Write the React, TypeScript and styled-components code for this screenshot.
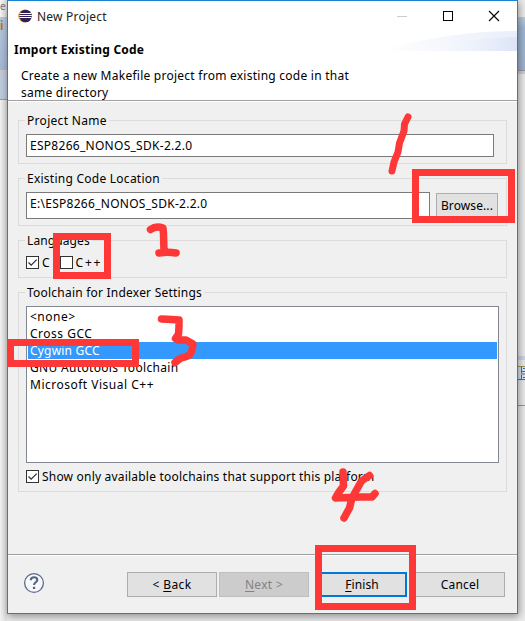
import React from "react";
import styled, { createGlobalStyle } from "styled-components";

const RED = "#fd3836";

const GlobalStyle = createGlobalStyle`
  *, *::before, *::after { box-sizing: border-box; }
  html, body { margin: 0; padding: 0; }
  body {
    width: 525px; height: 621px; overflow: hidden; background: #f0f0f0;
    font-family: "Noto Sans", "Open Sans", sans-serif; font-size: 12px; color: #000;
  }
`;

const Desktop = styled.div`
  position: relative;
  display: flex;
  width: 525px;
  height: 621px;
  overflow: hidden;
  background: #e9e9eb;
`;

const Strip = styled.div<{ $w: number }>`
  display: flex;
  flex-direction: column;
  flex: none;
  width: ${(p) => p.$w}px;
`;

const Band = styled.div<{ $h: number; $bg: string }>`
  flex: none;
  height: ${(p) => p.$h}px;
  background: ${(p) => p.$bg};
`;

const Letter = styled.span<{ $c: string; $bold?: boolean }>`
  display: block;
  width: max-content;
  font-size: ${(p) => (p.$bold ? 12 : 10)}px;
  line-height: ${(p) => (p.$bold ? 18 : 12)}px;
  color: ${(p) => p.$c};
  font-weight: ${(p) => (p.$bold ? 700 : 400)};
`;

const Dialog = styled.main`
  display: flex;
  flex-direction: column;
  flex: none;
  width: 511px;
  height: 614px;
  border: 1px solid #1883d7;
  background: #f0f0f0;
  box-shadow: 1px 2px 8px rgba(0, 0, 0, 0.42);
  z-index: 1;
`;

const TitleBar = styled.header`
  display: flex;
  align-items: center;
  height: 30px;
  padding: 0 17px 1px 10px;
  background: #fff;
`;

const Title = styled.div`
  flex: 1;
  margin-left: 5px;
  padding-top: 1px;
  color: #222;
`;

const WindowControls = styled.div`
  display: flex;
  gap: 34px;
`;

const Banner = styled.section`
  position: relative;
  height: 69px;
  padding: 10px 6px 0;
  background: #fff;
`;

const BannerArt = styled.svg`
  position: absolute;
  right: 0;
  top: 0;
`;

const BannerTitle = styled.h1`
  margin: 0 0 8px;
  height: 18px;
  line-height: 18px;
  font-size: 12px;
`;

const BannerText = styled.p`
  margin: 0;
  padding-left: 7px;
  line-height: 17px;
`;

const Rule = styled.div`
  height: 2px;
  flex: none;
  border-top: 1px solid #a0a0a0;
  background: #fff;
`;

const Content = styled.div`
  display: flex;
  flex-direction: column;
  gap: 14px;
  height: 452px;
  padding: 18px 10px 0;
`;

const Group = styled.section<{ $h: number }>`
  flex: none;
  height: ${(p) => p.$h}px;
  padding: 0 7px;
  border: 1px solid #dcdcdc;
`;

const Legend = styled.h2`
  width: max-content;
  height: 17px;
  margin: -9px 0 5px -1px;
  padding: 0 2px;
  background: #f0f0f0;
  line-height: 18px;
  font-size: 12px;
  font-weight: 400;
`;

const Text = styled.span<{ $ls?: number }>`
  white-space: pre;
  letter-spacing: ${(p) => p.$ls ?? 0}px;
`;

const Row = styled.div<{ $gap: number; $top?: number }>`
  display: flex;
  gap: ${(p) => p.$gap}px;
  padding-top: ${(p) => p.$top ?? 0}px;
`;

const Field = styled.div<{ $w: number; $h: number }>`
  width: ${(p) => p.$w}px;
  height: ${(p) => p.$h}px;
  padding-left: 3px;
  border: 1px solid #7a7a7a;
  background: #fff;
  line-height: 21px;
`;

const Button = styled.button<{ $w?: number; $default?: boolean; $top?: number }>`
  width: ${(p) => p.$w ?? 90}px;
  height: 25px;
  margin: ${(p) => p.$top ?? 0}px 0 0;
  padding: 0;
  border: ${(p) => (p.$default ? "2px solid #0078d7" : "1px solid #adadad")};
  background: #e1e1e1;
  color: #000;
  font: inherit;
  line-height: 20px;
  &:disabled { background: #ccc; border-color: #bfbfbf; color: #838383; }
`;

const Key = styled.span`
  text-decoration: underline;
  text-underline-offset: 2px;
  text-decoration-thickness: 1px;
  text-decoration-skip-ink: none;
`;

const CheckLabel = styled.label`
  display: flex;
  gap: 3px;
  height: 13px;
  line-height: 14px;
`;

const Box = styled.svg`
  flex: none;
  display: block;
`;

const HelpIcon = styled.svg`
  margin-top: -3px;
`;

const List = styled.ul`
  width: 473px;
  height: 157px;
  margin: 0 0 7px;
  padding: 1px;
  border: 1px solid #828790;
  background: #fff;
  list-style: none;
`;

const Item = styled.li<{ $on?: boolean }>`
  height: 17px;
  padding-left: 2px;
  line-height: 18px;
  background: ${(p) => (p.$on ? "#3399ff" : "transparent")};
  color: ${(p) => (p.$on ? "#fff" : "#000")};
`;

const Footer = styled.footer`
  display: flex;
  align-items: center;
  height: 57px;
  padding: 0 12px 0 15px;
`;

const FooterButtons = styled.div`
  display: flex;
  gap: 8px;
  margin-left: auto;
`;

const Paging = styled.div`
  display: flex;
  gap: 2px;
`;

const Markup = styled.svg`
  position: absolute;
  inset: 0;
  z-index: 2;
  pointer-events: none;
`;

function Check({ on }: { on?: boolean }) {
  return (
    <Box width="13" height="13">
      <rect x=".5" y=".5" width="12" height="12" fill="#fff" stroke="#333" />
      {on && <path d="M2.5 6.5 5.2 9.2 10.7 3.6" fill="none" stroke="#333" strokeWidth="1.3" />}
    </Box>
  );
}

const toolchains: { name: string; ls: number }[] = [
  { name: "<none>", ls: 0.5 },
  { name: "Cross GCC", ls: 0.5 },
  { name: "Cygwin GCC", ls: 0.2 },
  { name: "GNU Autotools Toolchain", ls: 0.32 },
  { name: "Microsoft Visual C++", ls: 0.5 },
];

export default function App() {
  return (
    <Desktop>
      <GlobalStyle />
      <Strip $w={7}>
        <Band $h={17} $bg="linear-gradient(90deg,#f5f5f5,#dedede)"><Letter $c="#777">e</Letter></Band>
        <Band $h={53} $bg="linear-gradient(#b5c8e0,#a5b8d3)"><Letter $c="#c07a16" $bold>i</Letter></Band>
        <Band $h={4} $bg="#c8c8d6" />
        <Band $h={25} $bg="#bdcbdb" />
        <Band $h={1} $bg="#999" />
        <Band $h={521} $bg="linear-gradient(90deg,#f2f2f2,#dedede)" />
      </Strip>
      <Dialog>
        <TitleBar>
          <svg width="14" height="14" viewBox="0 0 14 14">
            <circle cx="6.6" cy="7" r="6.4" fill="#f7941e" />
            <circle cx="7.6" cy="7" r="6.3" fill="#2c2255" />
            <path d="M1.5 4.5h12M1.2 6.5h12.6M1.5 8.5h12" stroke="#fff" strokeWidth="1" />
          </svg>
          <Title><Text $ls={0.22}>New Project</Text></Title>
          <WindowControls>
            <svg width="12" height="12"><path d="M1 6.5h10" stroke="#ccc" /></svg>
            <svg width="12" height="12"><rect x="1.5" y="1.5" width="9" height="9" fill="none" stroke="#000" /></svg>
            <svg width="12" height="12"><path d="M1 1 11 11M11 1 1 11" stroke="#000" strokeWidth="1.1" /></svg>
          </WindowControls>
        </TitleBar>
        <Banner>
          <BannerArt width="140" height="21">
            <defs>
              <linearGradient id="wave"><stop offset="0" stopColor="#fff" /><stop offset="1" stopColor="#e9eefa" /></linearGradient>
              <linearGradient id="wave2"><stop offset="0" stopColor="#fff" stopOpacity="0" /><stop offset="1" stopColor="#dce4f7" /></linearGradient>
            </defs>
            <path d="M3 20Q72 0 140 0V20Z" fill="url(#wave)" />
            <path d="M38 20Q85 7 140 6V20Z" fill="url(#wave2)" />
          </BannerArt>
          <BannerTitle><Text $ls={0.23}>Import Existing Code</Text></BannerTitle>
          <BannerText>
            <Text $ls={0.25}>Create a new Makefile project from existing code in that</Text><br />
            <Text $ls={0.25}>same directory</Text>
          </BannerText>
        </Banner>
        <Rule />
        <Content>
          <Group $h={44}>
            <Legend><Text $ls={0.3}>Project Name</Text></Legend>
            <Field $w={468} $h={23}><Text $ls={0.28}>ESP8266_NONOS_SDK-2.2.0</Text></Field>
          </Group>
          <Group $h={48}>
            <Legend><Text $ls={0.25}>Existing Code Location</Text></Legend>
            <Row $gap={6}>
              <Field $w={404} $h={27}><Text $ls={0.28}>E:\ESP8266_NONOS_SDK-2.2.0</Text></Field>
              <Button $w={62} $top={1}><Text $ls={0.1}>Browse...</Text></Button>
            </Row>
          </Group>
          <Group $h={38}>
            <Legend><Text $ls={0.1}>Languages</Text></Legend>
            <Row $gap={10} $top={2}>
              <CheckLabel><Check on /><Text>C</Text></CheckLabel>
              <CheckLabel><Check /><Text $ls={1.7}>C++</Text></CheckLabel>
            </Row>
          </Group>
          <Group $h={200}>
            <Legend><Text $ls={0.22}>Toolchain for Indexer Settings</Text></Legend>
            <List>
              {toolchains.map((t, i) => (
                <Item key={t.name} $on={i === 2}><Text $ls={t.ls}>{t.name}</Text></Item>
              ))}
            </List>
            <CheckLabel><Check on /><Text $ls={0.2}>Show only available toolchains that support this platform</Text></CheckLabel>
          </Group>
        </Content>
        <Rule />
        <Footer>
          <HelpIcon width="22" height="22" viewBox="0 0 22 22">
            <circle cx="11" cy="11" r="9.4" fill="#f7f8fa" stroke="#5a6b8c" strokeWidth="1.3" />
            <path d="M7.8 8.2C7.9 6.2 9.2 5.2 11.1 5.2 13 5.2 14.3 6.3 14.3 8 14.3 10.2 11 10.3 11 13.1" fill="none" stroke="#536488" strokeWidth="2.1" />
            <rect x="9.9" y="14.8" width="2.3" height="2.2" fill="#536488" />
          </HelpIcon>
          <FooterButtons>
            <Paging>
              <Button><Text $ls={0.4}>&lt; <Key>B</Key>ack</Text></Button>
              <Button disabled><Text $ls={0.3}><Key>N</Key>ext &gt;</Text></Button>
            </Paging>
            <Button $default><Text $ls={0.1}><Key>F</Key>inish</Text></Button>
            <Button><Text $ls={0.2}>Cancel</Text></Button>
          </FooterButtons>
        </Footer>
      </Dialog>
      <Strip $w={7}>
        <Band $h={17} $bg="#ececec" />
        <Band $h={53} $bg="linear-gradient(#bccde0,#a0b8d6 20%,#a0b4d0)" />
        <Band $h={1} $bg="#999" />
        <Band $h={3} $bg="#cacddd" />
        <Band $h={282} $bg="#ebebeb" />
        <Band $h={4} $bg="#d0d5e6" />
        <Band $h={6} $bg="#ebebeb" />
        <Band $h={15} $bg="#dbe5f3">
          <Box width="7" height="15">
            <path d="M0 .5h7" stroke="#a09450" />
            <path d="M3.5 1v13M3 5.5h4M3 13.5h4M0 13.5h3" stroke="#5b6f91" />
            <path d="M3 8h4" stroke="#9ba7be" strokeWidth="2" />
            <path d="M5 2.5h2M5 11.5h2" stroke="#397cae" />
          </Box>
        </Band>
        <Band $h={24} $bg="#ebebeb" />
        <Band $h={1} $bg="#999" />
        <Band $h={215} $bg="#ebebeb" />
      </Strip>
      <Markup width="525" height="621" fill="none" stroke={RED} strokeWidth="7" strokeLinecap="round" strokeLinejoin="round">
        <g strokeLinejoin="miter">
          <rect x="415.5" y="172.5" width="96" height="47" />
          <rect x="56.5" y="236.5" width="51" height="39" />
          <rect x="10.5" y="342.5" width="125" height="21" />
          <rect x="318.5" y="548.5" width="94" height="58" />
        </g>
        <path d="M408 117 404.5 124 404 131 399.5 143 398 152 394 162 392 171" />
        <path strokeWidth="7.5" d="M150.5 229.5Q156 225.5 163 228L163.5 234 164 252M159 253Q168 251.5 176 253" />
        <path strokeWidth="7.5" d="M161.5 319 172 319.5 179 320 179 327 178.5 334 175.5 338.5 178 340 186 340 193 344Q192.5 353 188 356L180 358.5 175 362.5" />
        <path strokeWidth="7.5" d="M343 472 343.5 486 339 492 335.5 498 360 497 372 497 375 493.5M369.5 475.5 361.5 481 352 498 349.5 508 344 518" />
      </Markup>
    </Desktop>
  );
}
